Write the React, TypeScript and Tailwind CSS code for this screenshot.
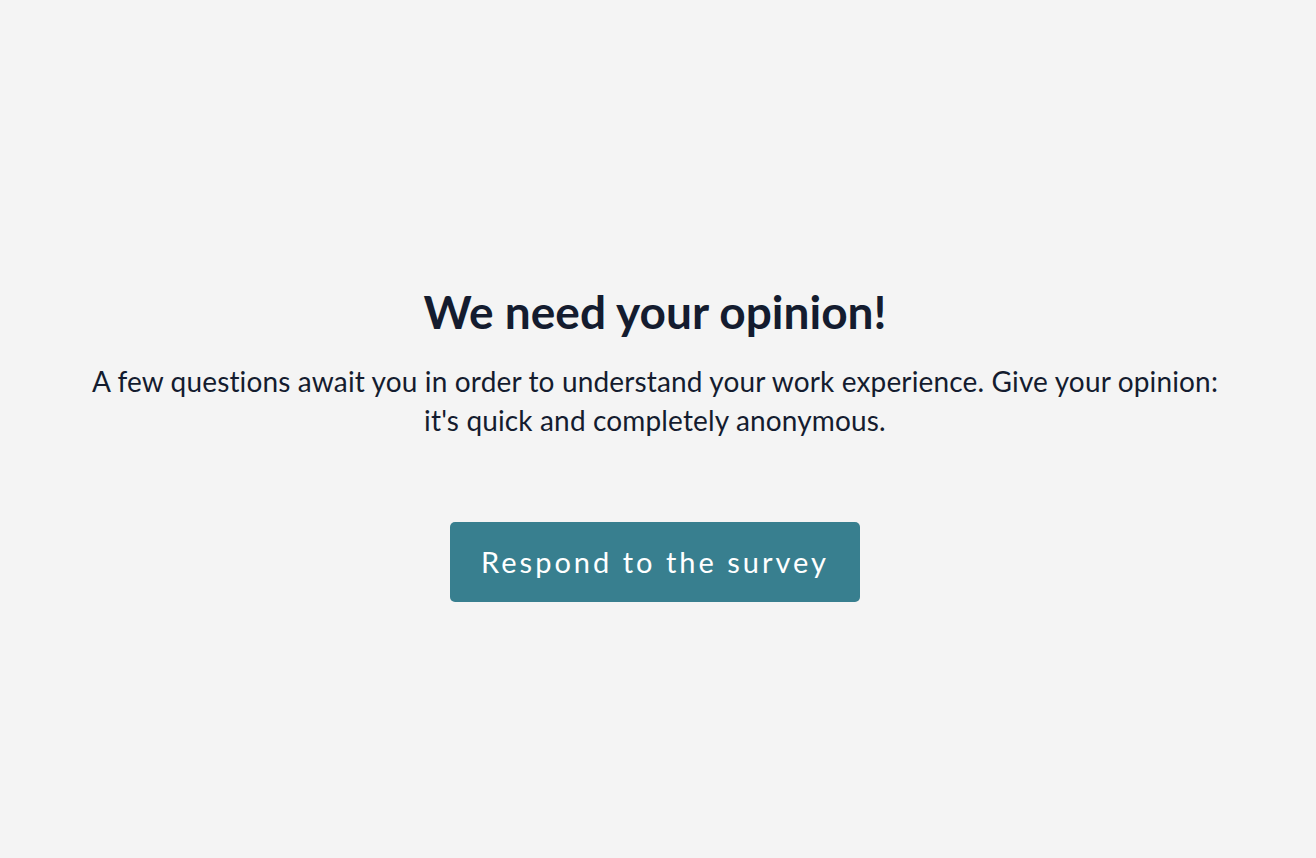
export default function App() {
  return (
    <div
      className="min-h-screen w-full bg-[#f4f4f4] flex flex-col items-center text-center pt-[280px] pr-[6px] text-[#141c2f]"
      style={{ fontFamily: "Lato, 'Noto Sans', sans-serif" }}
    >
      <h1 className="text-[46px] leading-[64px] font-bold">We need your opinion!</h1>
      <p className="mt-[18px] text-[28px] leading-[39px] tracking-[0.15px] max-w-[1200px]">
        A few questions await you in order to understand your work experience. Give your opinion:
        <br />
        it's quick and completely anonymous.
      </p>
      <button
        type="button"
        className="mt-[82px] w-[410px] h-[80px] rounded-[5px] bg-[#387f8f] text-white text-[29px] tracking-[3px]"
      >
        Respond to the survey
      </button>
    </div>
  );
}
